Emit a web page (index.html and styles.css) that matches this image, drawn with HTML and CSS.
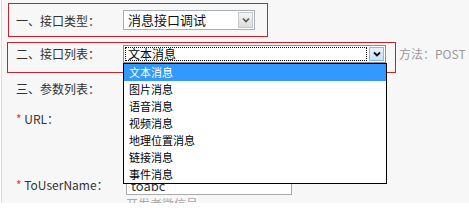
FILE: index.html
```html
<!DOCTYPE html>
<html lang="zh-CN">
<head>
    <meta charset="UTF-8">
    <title>接口调试</title>
    <link rel="stylesheet" href="styles.css">
</head>
<body>
    <div class="panel">
        <div class="hl-box box-type">
            <span class="label">一、接口类型：</span>
            <div class="fake-select sel-type">
                <span class="sel-text">消息接口调试</span>
                <span class="sel-arrow"><svg width="8" height="6" viewBox="0 0 8 6"><path d="M1 1.5 L4 4.5 L7 1.5" fill="none" stroke="#555" stroke-width="1.6"/></svg></span>
            </div>
        </div>

        <div class="row-list">
            <div class="hl-box box-list">
                <span class="label">二、接口列表：</span>
                <div class="fake-select sel-list">
                    <span class="sel-text focus">文本消息</span>
                    <span class="sel-arrow on"><svg width="8" height="6" viewBox="0 0 8 6"><path d="M1 1.5 L4 4.5 L7 1.5" fill="none" stroke="#111" stroke-width="1.8"/></svg></span>
                    <ul class="options">
                        <li class="active">文本消息</li>
                        <li>图片消息</li>
                        <li>语音消息</li>
                        <li>视频消息</li>
                        <li>地理位置消息</li>
                        <li>链接消息</li>
                        <li>事件消息</li>
                    </ul>
                </div>
            </div>
            <span class="method">方法：POST</span>
        </div>

        <div class="section">三、参数列表：</div>

        <div class="field field-url">
            <span class="label"><em>*</em> URL：</span>
        </div>

        <div class="field">
            <span class="label"><em>*</em> ToUserName：</span>
            <div class="input-wrap">
                <input type="text" value="toabc">
                <div class="hint">开发者微信号</div>
            </div>
        </div>
    </div>
</body>
</html>
```

FILE: styles.css
```css
body {
    margin: 0;
    background: #fff;
    font-family: "Noto Sans CJK SC", "Microsoft YaHei", sans-serif;
    font-size: 12px;
    color: #333;
}
.panel {
    margin-left: 1px;
    border-left: 1px solid #dcdcdc;
    background: #f7f7f7;
    height: 203px;
    padding-top: 3px;
    box-sizing: border-box;
    overflow: hidden;
}
.label {
    width: 107px;
    flex: none;
}

/* red boxes */
.hl-box {
    display: flex;
    border: 1px solid #c9212b;
    box-sizing: border-box;
}
.box-type {
    margin-left: 6px;
    width: 260px;
    height: 34px;
    align-items: center;
    padding-left: 7px;
}
.row-list {
    display: flex;
    margin-top: 5px;
    margin-left: 5px;
}
.box-list {
    width: 389px;
    height: 31px;
    padding: 2px 0 0 8px;
}
.box-list .label {
    line-height: 18px;
}
.method {
    margin: 3px 0 0 3px;
    color: #999;
    line-height: 18px;
}

/* select boxes */
.fake-select {
    position: relative;
    display: flex;
    background: #fff;
    border: 1px solid #a7adb5;
    box-sizing: border-box;
}
.sel-type {
    width: 132px;
    height: 20px;
    font-size: 13px;
    color: #111;
}
.sel-list {
    width: 263px;
    height: 18px;
    font-size: 12px;
    color: #000;
    border-color: #8e8e8e;
}
.sel-text {
    flex: 1;
    padding-left: 4px;
    line-height: 18px;
}
.sel-text.focus {
    line-height: 14px;
    margin: 1px;
    padding-left: 3px;
    outline: 1px dotted #000;
    outline-offset: -1px;
}
.sel-arrow {
    width: 15px;
    margin: 1px;
    display: flex;
    align-items: center;
    justify-content: center;
    background: linear-gradient(#f4f4f4, #dcdcdc);
    border: 1px solid #c6c6c6;
    box-sizing: border-box;
}
.sel-arrow.on {
    background: linear-gradient(#e6f2fb, #c9e1f4);
    border-color: #8fb7d8;
}

/* opened list */
.options {
    position: absolute;
    top: 17px;
    left: -1px;
    width: 264px;
    margin: 0;
    padding: 0;
    list-style: none;
    background: #fff;
    border: 1px solid #000;
    box-sizing: border-box;
    font-size: 11px;
    color: #000;
    z-index: 2;
}
.options li {
    height: 17px;
    line-height: 17px;
    padding-left: 5px;
}
.options li.active {
    background: #3399ff;
    color: #fff;
}

/* params */
.section {
    margin: 6px 0 0 14px;
    line-height: 20px;
}
.field {
    display: flex;
    margin-left: 14px;
    line-height: 20px;
}
.field em {
    font-style: normal;
    color: #e4393c;
}
.field-url {
    margin-top: 10px;
    height: 60px;
}
.field + .field {
    margin-top: 6px;
}
.field .label {
    width: 110px;
}
.input-wrap input {
    width: 166px;
    height: 20px;
    box-sizing: border-box;
    border: 1px solid #aaa;
    padding: 0 4px;
    font-family: inherit;
    font-size: 13px;
    color: #333;
    display: block;
}
.hint {
    color: #aaa;
    line-height: 18px;
}
```
